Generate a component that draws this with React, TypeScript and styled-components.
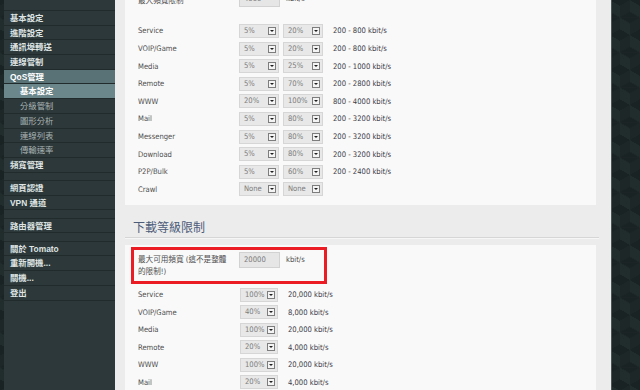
import styled, { createGlobalStyle } from "styled-components";

type Props = {
    value: string,
    $w?: number,
}

//Fundo escuro com cubos (lados da página)
const darkPattern = `
    background-color: #1d2728;
    background-image:
        linear-gradient(30deg, #1a2324 12%, transparent 12.5%, transparent 87%, #1a2324 87.5%, #1a2324),
        linear-gradient(150deg, #1a2324 12%, transparent 12.5%, transparent 87%, #1a2324 87.5%, #1a2324),
        linear-gradient(30deg, #1a2324 12%, transparent 12.5%, transparent 87%, #1a2324 87.5%, #1a2324),
        linear-gradient(150deg, #1a2324 12%, transparent 12.5%, transparent 87%, #1a2324 87.5%, #1a2324),
        linear-gradient(60deg, #212c2d 25%, transparent 25.5%, transparent 75%, #212c2d 75%, #212c2d),
        linear-gradient(60deg, #212c2d 25%, transparent 25.5%, transparent 75%, #212c2d 75%, #212c2d);
    background-size: 20px 35px;
    background-position: 0 0, 0 0, 10px 17.5px, 10px 17.5px, 0 0, 10px 17.5px;
`;

const GlobalStyle = createGlobalStyle`
    html, body {
        margin: 0;
        padding: 0;
        height: 100%;
        overflow: hidden;
    }
    body {
        font-family: "DejaVu Sans Condensed", "DejaVu Sans", "Noto Sans CJK TC", sans-serif;
        ${darkPattern}
    }
`;

const Page = styled.div`
    display: flex;
    height: 390px;
    padding-left: 4px;
    ${darkPattern}
`;

//Menu lateral
const Sidebar = styled.nav`
    width: 111px;
    flex: none;
    display: flex;
    flex-direction: column;
    background-color: #2c3839;
    font-family: "Liberation Sans", "Noto Sans CJK TC", sans-serif;
    font-size: 8.4px;
`;

const NavTop = styled.div`
    height: 11px;
    box-sizing: border-box;
    border-bottom: 1px solid #222b2c;
`;

const NavItem = styled.div<{ $sub?: boolean, $active?: boolean }>`
    height: 14.7px;
    box-sizing: border-box;
    line-height: 14px;
    padding-left: ${p => p.$sub ? 16 : 6}px;
    border-bottom: 1px solid #222b2c;
    white-space: nowrap;
    font-weight: ${p => p.$sub && !p.$active ? 400 : 700};
    color: ${p => p.$active ? "#ffffff" : p.$sub ? "#a9b3b4" : "#dfe4e4"};
    background-color: ${p => !p.$active ? "transparent" : p.$sub ? "#6c878b" : "#587276"};
`;

const NavGap = styled.div`
    height: 8.4px;
    box-sizing: border-box;
    border-bottom: 1px solid #222b2c;
`;

//Área principal
const Main = styled.main`
    width: 497px;
    flex: none;
    box-sizing: border-box;
    padding: 0 15px 0 10px;
    background-color: #ececec;
    border-right: 1px solid #4a5556;
    overflow: hidden;
    font-size: 7.6px;
    color: #4d4d4d;
`;

const Scroller = styled.div`
    margin-top: -18px;
`;

const Panel = styled.section<{ $top: number, $bottom: number }>`
    background-color: #f9f9f9;
    padding: ${p => p.$top}px 0 ${p => p.$bottom}px;
`;

const Row = styled.div<{ $label: number }>`
    display: grid;
    grid-template-columns: ${p => p.$label}px auto auto 1fr;
    align-items: center;
    height: 17.6px;
    padding-left: 13px;
`;

const SelectGroup = styled.div`
    display: flex;
    gap: 4px;
`;

const Range = styled.span`
    padding-left: 10px;
    color: #3b3a48;
    white-space: nowrap;
`;

const FirstRow = styled(Row)`
    height: 18px;
    margin-bottom: 14.2px;
`;

const TextBox = styled.div`
    width: 41px;
    height: 16px;
    box-sizing: border-box;
    padding-left: 4px;
    line-height: 14px;
    background-color: #e6e6e6;
    border: 1px solid #d2d2d2;
    color: #7a7a7a;
`;

const Unit = styled.span`
    padding-left: 6px;
    line-height: 16px;
    color: #4d4d4d;
`;

const SelectBox = styled.div<{ $w?: number }>`
    position: relative;
    width: ${p => p.$w ?? 40}px;
    height: 14px;
    box-sizing: border-box;
    padding-left: 4px;
    line-height: 12px;
    background-color: #e8e8e8;
    border: 1px solid #d6d6d6;
    color: #7c7c7c;
`;

const DropButton = styled.span`
    position: absolute;
    right: 2px;
    top: 2px;
    width: 8px;
    height: 8px;
    box-sizing: border-box;
    background-color: #f4f4f4;
    border: 1px solid #7d7d7d;

    &::after {
        content: "";
        position: absolute;
        left: 1px;
        top: 2px;
        border-left: 2px solid transparent;
        border-right: 2px solid transparent;
        border-top: 2px solid #1e1e1e;
    }
`;

const SectionTitle = styled.h2`
    margin: 0 -3px 7px 0;
    padding: 16px 0 2px 8px;
    font-family: "DejaVu Sans", "Noto Sans CJK TC", sans-serif;
    font-size: 12px;
    line-height: 14px;
    font-weight: 400;
    color: #4b5b78;
    border-bottom: 1px solid #d6d6d6;
    box-shadow: 0 1px 0 #f6f6f6;
`;

//Destaque vermelho em volta do campo
const Highlight = styled.div`
    display: grid;
    grid-template-columns: 101px auto 1fr;
    align-items: start;
    width: 196px;
    height: 37px;
    box-sizing: border-box;
    margin-left: 6px;
    margin-bottom: 2.2px;
    padding: 2px 0 0 4px;
    border: 3px solid #ec1c24;
`;

const HighlightLabel = styled.div`
    max-width: 94px;
    line-height: 12px;
    padding-top: 2px;
`;

const Select = ({ value, $w }: Props) => {
    return (
        <SelectBox $w={$w}>
            {value}
            <DropButton />
        </SelectBox>
    );
}

const upload = [
    ["Service", "5%", "20%", "200 - 800 kbit/s"],
    ["VOIP/Game", "5%", "20%", "200 - 800 kbit/s"],
    ["Media", "5%", "25%", "200 - 1000 kbit/s"],
    ["Remote", "5%", "70%", "200 - 2800 kbit/s"],
    ["WWW", "20%", "100%", "800 - 4000 kbit/s"],
    ["Mail", "5%", "80%", "200 - 3200 kbit/s"],
    ["Messenger", "5%", "80%", "200 - 3200 kbit/s"],
    ["Download", "5%", "80%", "200 - 3200 kbit/s"],
    ["P2P/Bulk", "5%", "60%", "200 - 2400 kbit/s"],
    ["Crawl", "None", "None", ""],
];

const download = [
    ["Service", "100%", "20,000 kbit/s"],
    ["VOIP/Game", "40%", "8,000 kbit/s"],
    ["Media", "100%", "20,000 kbit/s"],
    ["Remote", "20%", "4,000 kbit/s"],
    ["WWW", "100%", "20,000 kbit/s"],
    ["Mail", "20%", "4,000 kbit/s"],
];

const App = () => {
    return (
        <>
            <GlobalStyle />
            <Page>
                <Sidebar>
                    <NavTop />
                    <NavItem>基本設定</NavItem>
                    <NavItem>進階設定</NavItem>
                    <NavItem>通訊埠轉送</NavItem>
                    <NavItem>連線管制</NavItem>
                    <NavItem $active>QoS管理</NavItem>
                    <NavItem $sub $active>基本設定</NavItem>
                    <NavItem $sub>分級管制</NavItem>
                    <NavItem $sub>圖形分析</NavItem>
                    <NavItem $sub>連線列表</NavItem>
                    <NavItem $sub>傳輸速率</NavItem>
                    <NavItem>頻寬管理</NavItem>
                    <NavGap />
                    <NavItem>網頁認證</NavItem>
                    <NavItem>VPN 通道</NavItem>
                    <NavGap />
                    <NavItem>路由器管理</NavItem>
                    <NavGap />
                    <NavItem>關於 Tomato</NavItem>
                    <NavItem>重新開機...</NavItem>
                    <NavItem>關機...</NavItem>
                    <NavItem>登出</NavItem>
                </Sidebar>
                <Main>
                    <Scroller>
                        <Panel $top={8} $bottom={6.4}>
                            <FirstRow $label={101}>
                                <span>最大頻寬限制</span>
                                <TextBox>4000</TextBox>
                                <Unit>kbit/s</Unit>
                            </FirstRow>
                            {upload.map(([name, min, max, range]) => (
                                <Row $label={101} key={name}>
                                    <span>{name}</span>
                                    <SelectGroup>
                                        <Select value={min} />
                                        <Select value={max} />
                                    </SelectGroup>
                                    <Range>{range}</Range>
                                </Row>
                            ))}
                        </Panel>
                        <SectionTitle>下載等級限制</SectionTitle>
                        <Panel $top={2} $bottom={20}>
                            <Highlight>
                                <HighlightLabel>最大可用頻寬 (這不是整體的限制!)</HighlightLabel>
                                <TextBox>20000</TextBox>
                                <Unit>kbit/s</Unit>
                            </Highlight>
                            {download.map(([name, pct, rate]) => (
                                <Row $label={102} key={name}>
                                    <span>{name}</span>
                                    <Select value={pct} $w={38} />
                                    <Range>{rate}</Range>
                                </Row>
                            ))}
                        </Panel>
                    </Scroller>
                </Main>
            </Page>
        </>
    );
}

export default App;
